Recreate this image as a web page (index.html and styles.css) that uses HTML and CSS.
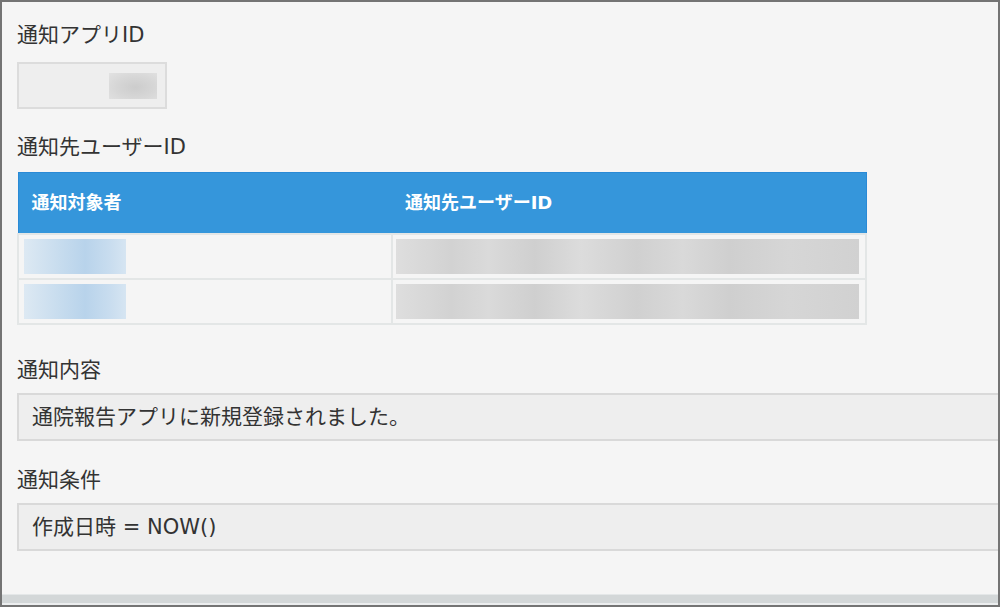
FILE: index.html
```html
<!DOCTYPE html>
<html lang="ja">
<head>
    <meta charset="UTF-8">
    <meta name="viewport" content="width=device-width, initial-scale=1.0">
    <title>通知設定</title>
    <link rel="stylesheet" href="styles.css">
</head>
<body>
    <div class="frame">
        <div class="content">
            <div class="field field-app">
                <div class="label">通知アプリID</div>
                <div class="app-box">
                    <span class="blur blur-gray app-id"></span>
                </div>
            </div>

            <div class="field field-users">
                <div class="label">通知先ユーザーID</div>
                <table class="user-table">
                    <thead>
                        <tr>
                            <th class="col-name">通知対象者</th>
                            <th>通知先ユーザーID</th>
                        </tr>
                    </thead>
                    <tbody>
                        <tr>
                            <td><span class="blur blur-blue name"></span></td>
                            <td><span class="blur blur-gray user-id"></span></td>
                        </tr>
                        <tr>
                            <td><span class="blur blur-blue name"></span></td>
                            <td><span class="blur blur-gray user-id"></span></td>
                        </tr>
                    </tbody>
                </table>
            </div>

            <div class="field field-message">
                <div class="label">通知内容</div>
                <div class="value-box">通院報告アプリに新規登録されました。</div>
            </div>

            <div class="field field-condition">
                <div class="label">通知条件</div>
                <div class="value-box">作成日時 = NOW()</div>
            </div>
        </div>
        <div class="footer-bar"></div>
    </div>
</body>
</html>
```

FILE: styles.css
```css
* {
    margin: 0;
    padding: 0;
    box-sizing: border-box;
}

body {
    font-family: 'DejaVu Sans', 'Noto Sans CJK JP', sans-serif;
    color: #333;
    background: #f5f5f5;
}

.frame {
    width: 1000px;
    height: 607px;
    border: 2px solid #747474;
    background: #f5f5f5;
    display: flex;
    flex-direction: column;
    overflow: hidden;
}

.content {
    flex: 1;
    padding: 18px 0 0 15px;
}

.label {
    font-size: 21px;
    line-height: 30px;
    margin-bottom: 10px;
    color: #333;
}

.field-app .label {
    margin-bottom: 12px;
}

.field-users {
    margin-top: 23px;
}

.field-message {
    margin-top: 30px;
}

.field-message .label,
.field-condition .label {
    margin-bottom: 8px;
}

.field-condition {
    margin-top: 24px;
}

/* app id box */
.app-box {
    width: 150px;
    height: 47px;
    background: #eeeeee;
    border: 2px solid #dcdcdc;
    display: flex;
    align-items: center;
    justify-content: flex-end;
    padding-right: 8px;
}

/* blurred (masked) values */
.blur {
    display: block;
    overflow: hidden;
}

.blur-gray {
    background: linear-gradient(90deg, #dedede 0%, #d2d2d2 12%, #dadada 20%, #cfcfcf 30%, #dcdcdc 40%, #d0d0d0 52%, #d9d9d9 62%, #cfcfcf 72%, #d6d6d6 85%, #d1d1d1 100%);
}

.blur-blue {
    background: linear-gradient(90deg, #dde9f3 0%, #c7dcee 35%, #b8d3eb 60%, #c9ddef 85%, #d6e5f2 100%);
}

.app-id {
    width: 48px;
    height: 26px;
    background: radial-gradient(ellipse at 55% 55%, #cccccc 0%, #d6d6d6 50%, #e2e2e2 100%);
}

/* user table */
.user-table {
    width: 850px;
    border-collapse: collapse;
    border: 1px solid #dfe3e3;
    background: #f5f5f5;
}

.user-table th {
    background: #3596db;
    color: #fff;
    font-size: 18px;
    font-weight: bold;
    text-align: left;
    height: 61px;
    padding: 0 13px 4px;
    border-top: 1px solid #2a8ad6;
    border-bottom: 1px solid #2a8ad6;
}

.user-table th:first-child {
    border-left: 1px solid #2a8ad6;
}

.user-table th:last-child {
    border-right: 1px solid #2a8ad6;
}

.user-table .col-name {
    width: 374px;
}

.user-table td {
    height: 45px;
    padding: 0 4px 0 3px;
    border: 2px solid #e3e6e6;
}

.name {
    width: 102px;
    height: 35px;
    margin-left: 2px;
}

.user-id {
    width: 463px;
    height: 35px;
}

/* text value boxes */
.value-box {
    height: 48px;
    margin-right: -20px;
    background: #eeeeee;
    border: 2px solid #d9d9d9;
    padding: 0 13px;
    font-size: 21px;
    line-height: 44px;
    color: #333;
}

.footer-bar {
    height: 11px;
    background: #d3d7d8;
    border-top: 1px solid #e4e7e8;
    border-bottom: 2px solid #eceeef;
}
```
